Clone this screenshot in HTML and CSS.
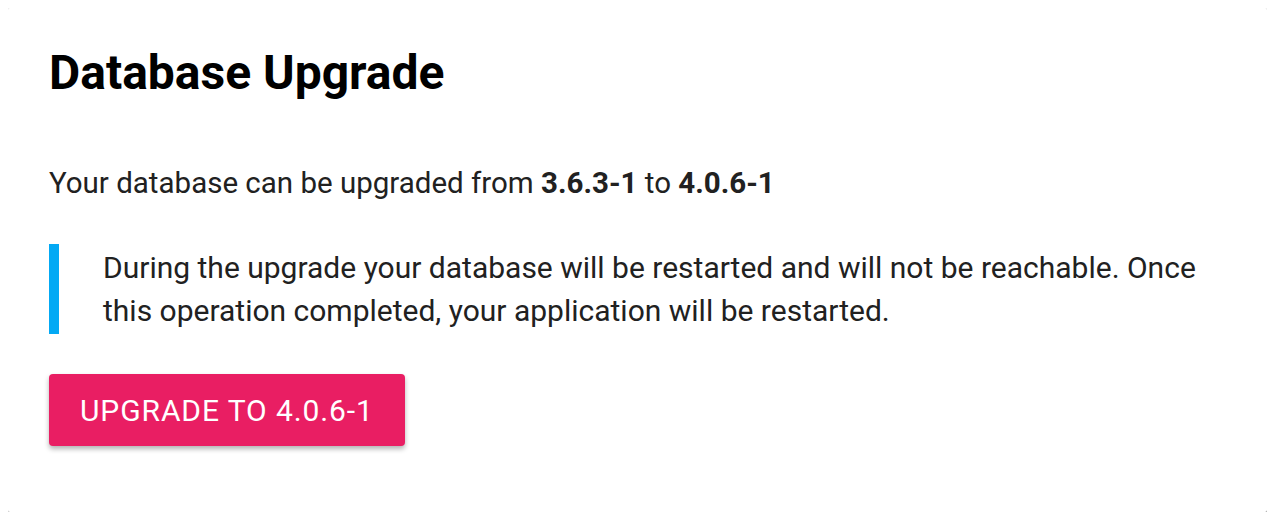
FILE: index.html
```html
<!DOCTYPE html>
<html lang="en">
<head>
    <meta charset="UTF-8">
    <meta name="viewport" content="width=device-width, initial-scale=1.0">
    <title>Database Upgrade</title>
    <link rel="stylesheet" href="styles.css">
</head>
<body>
    <div class="card">
        <h1>Database Upgrade</h1>
        <p class="summary">Your database can be upgraded from <strong>3.6.3-1</strong> to <strong>4.0.6-1</strong></p>
        <blockquote class="notice">
            During the upgrade your database will be restarted and will not be reachable. Once this operation completed, your application will be restarted.
        </blockquote>
        <button class="upgrade-btn">Upgrade to 4.0.6-1</button>
    </div>
</body>
</html>
```

FILE: styles.css
```css
body {
    font-family: Roboto, 'Liberation Sans', sans-serif;
    margin: 8px;
    background: #fff;
    color: #212121;
}
.card {
    background: #fff;
    border-radius: 2px;
    box-shadow: 1px 1px 0 rgba(0, 0, 0, 0.22), 0 2px 4px rgba(0, 0, 0, 0.45), 0 0 3px rgba(0, 0, 0, 0.12);
    padding: 37px 41px 66px;
}
h1 {
    font-size: 48px;
    font-weight: 700;
    color: #000;
    margin: 0 0 61px;
    line-height: 56px;
}
.summary {
    font-size: 29.5px;
    line-height: 43px;
    margin: 0 0 39px;
}
.summary strong {
    font-weight: 700;
}
.notice {
    margin: 0 0 40px;
    padding: 2px 0 2px 44px;
    border-left: 10px solid #03a9f4;
    font-size: 30px;
    line-height: 43px;
}
.upgrade-btn {
    display: block;
    font-family: Roboto, 'Liberation Sans', sans-serif;
    font-size: 30px;
    text-transform: uppercase;
    letter-spacing: 0.9px;
    color: #fff;
    background: #e91e63;
    border: none;
    border-radius: 4px;
    height: 72px;
    padding: 0 31px;
    box-shadow: 0 3px 5px rgba(0, 0, 0, 0.3);
    cursor: pointer;
}
```
